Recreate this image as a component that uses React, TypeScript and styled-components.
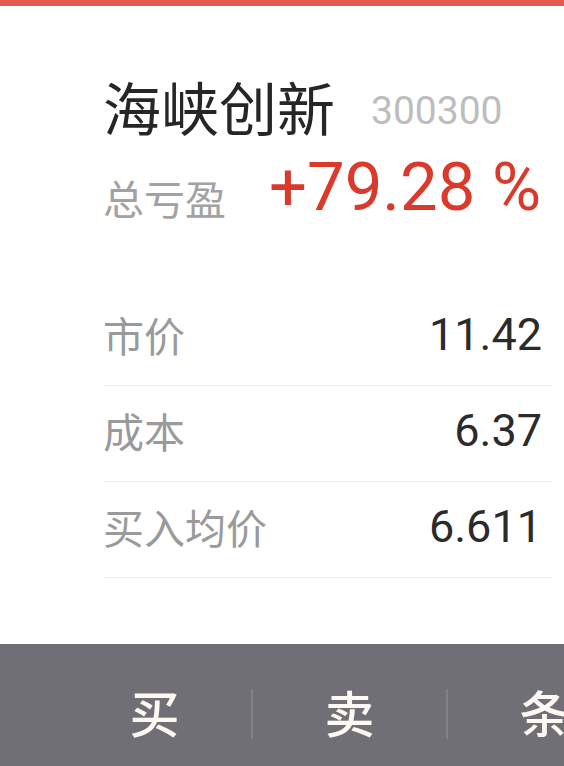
import React from "react";
import styled, {createGlobalStyle} from "styled-components";

const CJK = `"Noto Sans CJK SC", "Noto Sans", sans-serif`;
const NUM = `Roboto, "Noto Sans CJK SC", sans-serif`;

interface IRow {
    label: string;
    value: string;
}

const rows: IRow[] = [
    {label: "市价", value: "11.42"},
    {label: "成本", value: "6.37"},
    {label: "买入均价", value: "6.611"},
];

// The last tab runs off the right edge, only its first character shows.
const actions = ["买", "卖", "条"];

const GlobalStyle = createGlobalStyle`
    html, body {
        margin: 0;
        padding: 0;
        background: #fff;
        overflow: hidden;
    }
`;

const Page = styled.div`
    width: 564px;
    height: 766px;
    display: flex;
    flex-direction: column;
    overflow: hidden;
`;

const TopStripe = styled.div`
    height: 6px;
    flex-shrink: 0;
    background: #e15a50;
`;

const Summary = styled.div`
    padding: 71px 12px 0 103px;
`;

const TitleRow = styled.div`
    display: flex;
    align-items: flex-start;
    gap: 36px;
`;

const StockName = styled.div`
    font-family: ${CJK};
    font-size: 58px;
    line-height: 1;
    color: #262626;
    white-space: nowrap;
`;

const StockCode = styled.div`
    font-family: ${NUM};
    font-size: 39px;
    line-height: 1;
    color: #bdbdbd;
    margin-top: 15px;
`;

const ProfitRow = styled.div`
    display: flex;
    align-items: flex-start;
    gap: 43px;
    margin-top: 19px;
`;

const ProfitLabel = styled.div`
    font-family: ${CJK};
    font-size: 41px;
    line-height: 1;
    color: #a2a2a2;
    margin-top: 23px;
    white-space: nowrap;
`;

const ProfitValue = styled.div`
    font-family: ${NUM};
    font-size: 67px;
    line-height: 1;
    color: #d93a2b;
    white-space: nowrap;
`;

const Table = styled.div`
    margin-top: 69px;
`;

const Row = styled.div`
    height: 96px;
    box-sizing: border-box;
    display: flex;
    align-items: center;
    justify-content: space-between;
    padding: 0 10px 6px 0;
    border-bottom: 1px solid #ececec;
`;

const Label = styled.div`
    font-family: ${CJK};
    font-size: 41px;
    line-height: 1;
    color: #9a9a9a;
`;

const Value = styled.div`
    font-family: ${NUM};
    font-size: 45px;
    line-height: 1;
    color: #2b2b2b;
`;

const ActionBar = styled.div`
    margin-top: auto;
    height: 122px;
    flex-shrink: 0;
    box-sizing: border-box;
    display: flex;
    align-items: center;
    padding: 12px 0 0 58px;
    background: #706f76;
    overflow: hidden;
`;

const Action = styled.div`
    flex: 0 0 193px;
    text-align: center;
    font-family: ${CJK};
    font-size: 50px;
    font-weight: 500;
    line-height: 1;
    color: #fdf8f2;
    white-space: nowrap;
`;

const Separator = styled.div`
    flex: 0 0 2px;
    height: 50px;
    margin-top: 6px;
    background: #828187;
`;

export default function App() {
    return (
        <Page>
            <GlobalStyle />
            <TopStripe />
            <Summary>
                <TitleRow>
                    <StockName>海峡创新</StockName>
                    <StockCode>300300</StockCode>
                </TitleRow>
                <ProfitRow>
                    <ProfitLabel>总亏盈</ProfitLabel>
                    <ProfitValue>+79.28 %</ProfitValue>
                </ProfitRow>
                <Table>
                    {rows.map((r) => (
                        <Row key={r.label}>
                            <Label>{r.label}</Label>
                            <Value>{r.value}</Value>
                        </Row>
                    ))}
                </Table>
            </Summary>
            <ActionBar>
                {actions.map((a, i) => (
                    <React.Fragment key={a}>
                        {i > 0 && <Separator />}
                        <Action>{a}</Action>
                    </React.Fragment>
                ))}
            </ActionBar>
        </Page>
    );
}
